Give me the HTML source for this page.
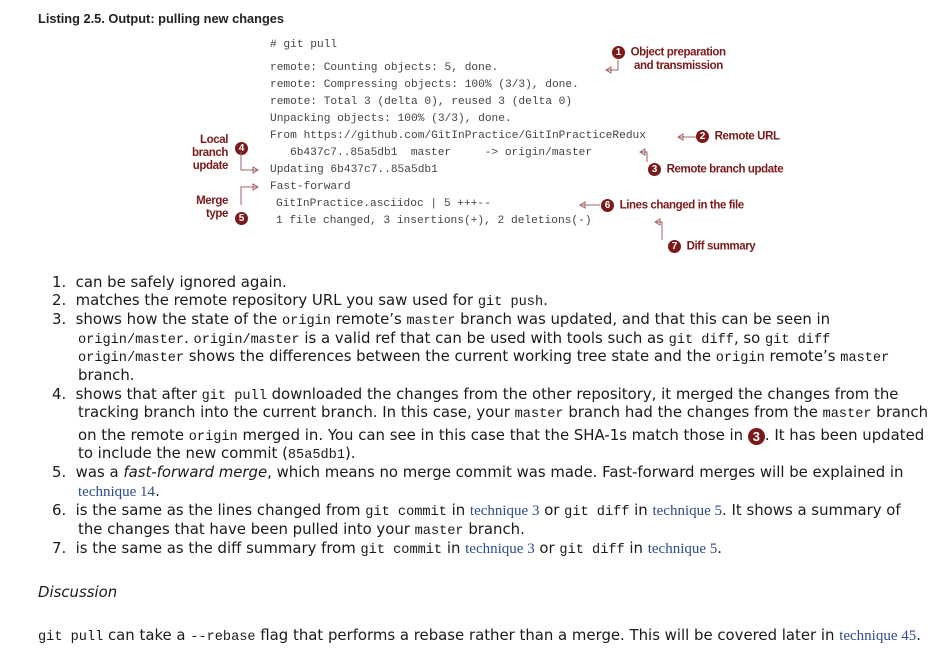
<!DOCTYPE html>
<html><head><meta charset="utf-8"><style>
body{margin:0;width:951px;height:651px;background:#fff;position:relative;overflow:hidden;font-family:"DejaVu Sans","Liberation Sans",sans-serif;color:#1a1a1a}
.a{position:absolute;white-space:nowrap}
.t{font-size:14.9px;line-height:18px}
.c{font-family:"Liberation Mono",monospace;font-size:11.2px;color:#444}
.m{font-family:"Liberation Mono",monospace;font-size:13.6px}
.l{font-family:"Liberation Serif",serif;color:#2d4c8c;font-size:15px}
.n{font-family:"Liberation Sans",sans-serif;font-weight:bold;color:#7a1a1a;font-size:11.5px;line-height:13px;letter-spacing:-0.4px}
.b{display:inline-block;width:13px;height:13px;border-radius:50%;background:#7a1a1a;color:#fff;font:bold 10px/13px "Liberation Sans",sans-serif;text-align:center;vertical-align:middle;letter-spacing:0}
</style></head><body>
<div class="a" style="left:38px;top:11px;font:bold 12.8px 'Liberation Sans',sans-serif;color:#222">Listing 2.5. Output: pulling new changes</div>

<div class="a c" style="left:270px;top:39px">#&nbsp;git pull</div>
<div class="a c" style="left:270px;top:62px">remote: Counting objects: 5, done.</div>
<div class="a c" style="left:270px;top:79px">remote: Compressing objects: 100% (3/3), done.</div>
<div class="a c" style="left:270px;top:96px">remote: Total 3 (delta 0), reused 3 (delta 0)</div>
<div class="a c" style="left:270px;top:113px">Unpacking objects: 100% (3/3), done.</div>
<div class="a c" style="left:270px;top:130px">From https://github.com/GitInPractice/GitInPracticeRedux</div>
<div class="a c" style="left:290px;top:147px">6b437c7..85a5db1&nbsp; master&nbsp;&nbsp;&nbsp;&nbsp; -&gt; origin/master</div>
<div class="a c" style="left:270px;top:164px">Updating 6b437c7..85a5db1</div>
<div class="a c" style="left:270px;top:181px">Fast-forward</div>
<div class="a c" style="left:276px;top:198px">GitInPractice.asciidoc | 5 +++--</div>
<div class="a c" style="left:276px;top:215px">1 file changed, 3 insertions(+), 2 deletions(-)</div>

<div class="a n" style="left:612px;top:46px"><span class="b">1</span>&nbsp; Object preparation</div>
<div class="a n" style="left:634px;top:60px">and transmission</div>
<div class="a n" style="left:696px;top:130px"><span class="b">2</span>&nbsp; Remote URL</div>
<div class="a n" style="left:648px;top:163px"><span class="b">3</span>&nbsp; Remote branch update</div>
<div class="a n" style="left:601px;top:199px"><span class="b">6</span>&nbsp; Lines changed in the file</div>
<div class="a n" style="left:668px;top:240px"><span class="b">7</span>&nbsp; Diff summary</div>
<div class="a n" style="left:188px;top:134px;text-align:right;width:40px">Local<br>branch<br>update</div>
<div class="a" style="left:235px;top:138px"><span class="b">4</span></div>
<div class="a n" style="left:188px;top:195px;text-align:right;width:40px">Merge<br>type</div>
<div class="a" style="left:235px;top:208px"><span class="b">5</span></div>

<svg class="a" style="left:0;top:0" width="951" height="270" fill="none" stroke="#a06060" stroke-width="1">
<path d="M618 60v10h-12M606 70l5-3v6z"/>
<path d="M696 137h-18M678 137l5-3v6z"/>
<path d="M640 152h7v10M640 152l5-3v6z"/>
<path d="M600 205h-20M580 205l5-3v6z"/>
<path d="M662 222v18M655 222h7M655 222l5-3v6z"/>
<path d="M241 152v18h17M258 170l-5-3v6z"/>
<path d="M241 205v-18h17M258 187l-5-3v6z"/>
</svg>

<div class="a t" style="left:52px;top:273px">1.&nbsp; can be safely ignored again.</div>
<div class="a t" style="left:52px;top:291px">2.&nbsp; matches the remote repository URL you saw used for <span class="m">git push</span>.</div>
<div class="a t" style="left:52px;top:310px">3.&nbsp; shows how the state of the <span class="m">origin</span> remote’s <span class="m">master</span> branch was updated, and that this can be seen in</div>
<div class="a t" style="left:78px;top:329px"><span class="m">origin/master</span>. <span class="m">origin/master</span> is a valid ref that can be used with tools such as <span class="m">git diff</span>, so <span class="m">git diff</span></div>
<div class="a t" style="left:78px;top:347px"><span class="m">origin/master</span> shows the differences between the current working tree state and the <span class="m">origin</span> remote’s <span class="m">master</span></div>
<div class="a t" style="left:78px;top:366px">branch.</div>
<div class="a t" style="left:52px;top:385px">4.&nbsp; shows that after <span class="m">git pull</span> downloaded the changes from the other repository, it merged the changes from the</div>
<div class="a t" style="left:78px;top:403px">tracking branch into the current branch. In this case, your <span class="m">master</span> branch had the changes from the <span class="m">master</span> branch</div>
<div class="a t" style="left:78px;top:426px">on the remote <span class="m">origin</span> merged in. You can see in this case that the SHA-1s match those in <span class="b" style="width:17px;height:17px;font-size:13px;line-height:17px">3</span>. It has been updated</div>
<div class="a t" style="left:78px;top:444px">to include the new commit (<span class="m">85a5db1</span>).</div>
<div class="a t" style="left:52px;top:463px">5.&nbsp; was a <i>fast-forward merge</i>, which means no merge commit was made. Fast-forward merges will be explained in</div>
<div class="a t" style="left:78px;top:482px"><span class="l">technique 14</span>.</div>
<div class="a t" style="left:52px;top:501px">6.&nbsp; is the same as the lines changed from <span class="m">git commit</span> in <span class="l">technique 3</span> or <span class="m">git diff</span> in <span class="l">technique 5</span>. It shows a summary of</div>
<div class="a t" style="left:78px;top:520px">the changes that have been pulled into your <span class="m">master</span> branch.</div>
<div class="a t" style="left:52px;top:539px">7.&nbsp; is the same as the diff summary from <span class="m">git commit</span> in <span class="l">technique 3</span> or <span class="m">git diff</span> in <span class="l">technique 5</span>.</div>
<div class="a t" style="left:38px;top:583px"><i>Discussion</i></div>
<div class="a t" style="left:38px;top:626px"><span class="m">git pull</span> can take a <span class="m">--rebase</span> flag that performs a rebase rather than a merge. This will be covered later in <span class="l">technique 45</span>.</div>
</body></html>
